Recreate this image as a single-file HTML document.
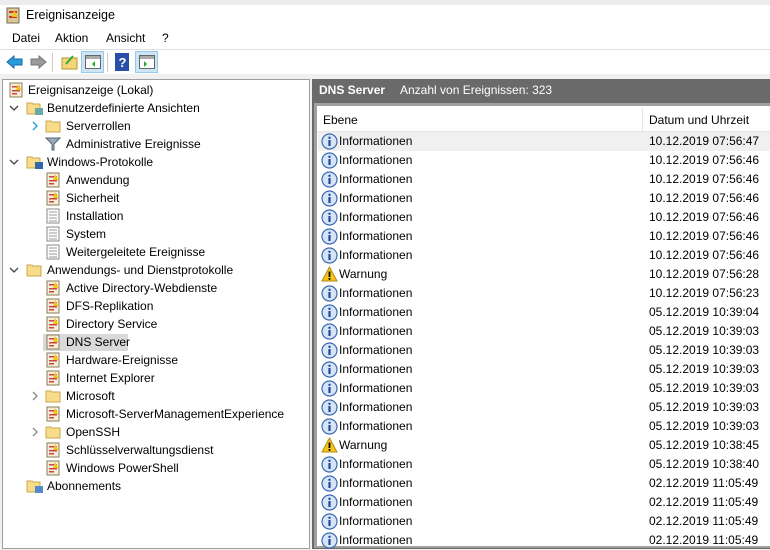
<!DOCTYPE html>
<html><head><meta charset="utf-8"><style>
*{margin:0;padding:0;box-sizing:border-box}
body{width:770px;height:543px;overflow:hidden;background:#f0f0f0;font-family:"Liberation Sans",sans-serif;font-size:12px;color:#000;position:relative}
.abs{position:absolute}
.t{white-space:nowrap}
.ico{display:inline-block;vertical-align:middle}
.row{position:absolute;left:318px;width:452px;height:19px;line-height:19px;white-space:nowrap}
.row .d{position:absolute;left:331px}
.row .n{position:absolute;left:21px}
</style></head><body>
<div class="abs" style="left:0;top:0;width:770px;height:5px;background:#ececec"></div>
<div class="abs" style="left:0;top:5px;width:770px;height:44px;background:#fff"></div>
<svg class="abs" style="left:5px;top:7px" width="16" height="17"><rect x="2" y="1" width="12" height="15" fill="#d8c89a" stroke="#7a6a4a"/><rect x="4" y="4" width="8" height="2" fill="#c33"/><rect x="4" y="9" width="8" height="2" fill="#c33"/><path d="M9 3 L13 10 L7 10Z" fill="#f5c518"/></svg>
<div class="abs t" style="left:26px;top:8px;font-size:12.5px">Ereignisanzeige</div>
<div class="abs t" style="left:12px;top:31px">Datei</div>
<div class="abs t" style="left:55px;top:31px">Aktion</div>
<div class="abs t" style="left:106px;top:31px">Ansicht</div>
<div class="abs t" style="left:162px;top:31px">?</div>
<div class="abs" style="left:0;top:49px;width:770px;height:1px;background:#e0e0e0"></div>
<div class="abs" style="left:0;top:50px;width:770px;height:24px;background:#fff"></div>
<svg class="abs" style="left:6px;top:54px" width="18" height="16"><path d="M1 8 L8 2 V5 H16 V11 H8 V14Z" fill="#2a9ad8" stroke="#1a6aa8"/></svg>
<svg class="abs" style="left:29px;top:54px" width="18" height="16"><path d="M17 8 L10 2 V5 H2 V11 H10 V14Z" fill="#9a9a9a" stroke="#777"/></svg>
<div class="abs" style="left:52px;top:53px;width:1px;height:19px;background:#ccc"></div>
<svg class="abs" style="left:61px;top:54px" width="17" height="16"><rect x="1" y="4" width="15" height="11" fill="#f3d57a" stroke="#b8962e"/><path d="M5 10 L12 2" stroke="#3a3" stroke-width="2"/></svg>
<div class="abs" style="left:81px;top:51px;width:23px;height:22px;background:#cde6f7;border:1px solid #99c9ea"></div>
<svg class="abs" style="left:85px;top:55px" width="16" height="14"><rect x="0.5" y="0.5" width="15" height="13" fill="#fff" stroke="#666"/><rect x="1" y="1" width="14" height="3" fill="#aaa"/><path d="M10 6 L7 9 L10 12Z" fill="#2a2"/></svg>
<div class="abs" style="left:107px;top:53px;width:1px;height:19px;background:#ccc"></div>
<svg class="abs" style="left:115px;top:53px" width="14" height="18"><rect x="0" y="0" width="14" height="18" fill="#2a4fa8"/><text x="3.5" y="14" font-size="13" font-family="Liberation Sans" font-weight="bold" fill="#fff">?</text></svg>
<div class="abs" style="left:135px;top:51px;width:23px;height:22px;background:#cde6f7;border:1px solid #99c9ea"></div>
<svg class="abs" style="left:139px;top:55px" width="16" height="14"><rect x="0.5" y="0.5" width="15" height="13" fill="#fff" stroke="#666"/><rect x="1" y="1" width="14" height="3" fill="#aaa"/><path d="M5 6 L8 9 L5 12Z" fill="#2a2"/></svg>

<div class="abs" style="left:2px;top:79px;width:308px;height:470px;background:#fff;border:1px solid #a0a0a0"></div>
<div id="tree"></div>
<div class="abs" style="left:312px;top:79px;width:458px;height:470px;background:#6a6a6a"></div>
<div class="abs t" style="left:319px;top:83px;color:#fff;font-weight:bold">DNS Server</div>
<div class="abs t" style="left:400px;top:83px;color:#fff">Anzahl von Ereignissen: 323</div>
<div class="abs" style="left:314px;top:103px;width:456px;height:445px;background:#a0a0a0"></div>
<div class="abs" style="left:317px;top:106px;width:453px;height:440px;background:#fff"></div>
<div class="abs" style="left:317px;top:131px;width:453px;height:1px;background:#e5e5e5"></div>
<div class="abs" style="left:642px;top:108px;width:1px;height:23px;background:#e5e5e5"></div>
<div class="abs t" style="left:323px;top:113px">Ebene</div>
<div class="abs t" style="left:649px;top:113px">Datum und Uhrzeit</div>
<div id="rows"></div>
<script>
function doc(){return '<svg class="ico" width="16" height="16"><rect x="2" y="1" width="12" height="14" fill="#f5eed8" stroke="#8a7a5a"/><rect x="4" y="4" width="8" height="1.5" fill="#c44"/><rect x="4" y="8" width="8" height="1.5" fill="#c44"/><rect x="4" y="11" width="5" height="1.5" fill="#c44"/><path d="M10 2 L13.5 8 L8 8Z" fill="#f5c518"/></svg>'}
function fold(){return '<svg class="ico" width="16" height="16"><path d="M1 3 H6 L7 4 H15 V14 H1Z" fill="#f8dc8a" stroke="#c8a850"/></svg>'}
function log(){return '<svg class="ico" width="16" height="16"><rect x="2" y="1" width="12" height="14" fill="#fff" stroke="#8a8a8a"/><path d="M4 4H12M4 7H12M4 10H12M4 13H12" stroke="#999"/></svg>'}
function filt(){return '<svg class="ico" width="16" height="16"><path d="M1 2 H15 L9 8 V14 L7 14 V8Z" fill="#9ab" stroke="#567"/></svg>'}
function fspec(c){return '<svg class="ico" width="18" height="16"><path d="M1 3 H6 L7 4 H14 V14 H1Z" fill="#f8dc8a" stroke="#c8a850"/><rect x="9" y="8" width="8" height="7" fill="'+c+'"/></svg>'}
var items=[
[0,8,28,doc(),'Ereignisanzeige (Lokal)',''],
[1,26,47,fspec('#6aa'),'Benutzerdefinierte Ansichten','v'],
[2,45,66,fold(),'Serverrollen','>b'],
[2,45,66,filt(),'Administrative Ereignisse',''],
[1,26,47,fspec('#36a'),'Windows-Protokolle','v'],
[2,45,66,doc(),'Anwendung',''],
[2,45,66,doc(),'Sicherheit',''],
[2,45,66,log(),'Installation',''],
[2,45,66,log(),'System',''],
[2,45,66,log(),'Weitergeleitete Ereignisse',''],
[1,26,47,fold(),'Anwendungs- und Dienstprotokolle','v'],
[2,45,66,doc(),'Active Directory-Webdienste',''],
[2,45,66,doc(),'DFS-Replikation',''],
[2,45,66,doc(),'Directory Service',''],
[2,45,66,doc(),'DNS Server','sel'],
[2,45,66,doc(),'Hardware-Ereignisse',''],
[2,45,66,doc(),'Internet Explorer',''],
[2,45,66,fold(),'Microsoft','>'],
[2,45,66,doc(),'Microsoft-ServerManagementExperience',''],
[2,45,66,fold(),'OpenSSH','>'],
[2,45,66,doc(),'Schlüsselverwaltungsdienst',''],
[2,45,66,doc(),'Windows PowerShell',''],
[1,26,47,fspec('#58c'),'Abonnements','']];
var h='';items.forEach(function(it,i){var y=81+i*18;
if(it[5]=='sel')h+='<div class="abs" style="left:43px;top:'+(y+1)+'px;width:85px;height:17px;background:#d9d9d9"></div>';
var a=it[5];
if(a=='v')h+='<svg class="abs" style="left:'+(it[1]-17)+'px;top:'+(y+5)+'px" width="10" height="8"><path d="M1 2 L5 6 L9 2" stroke="#444" fill="none" stroke-width="1.3"/></svg>';
if(a=='>'||a=='>b')h+='<svg class="abs" style="left:'+(it[1]-14)+'px;top:'+(y+4)+'px" width="8" height="10"><path d="M2 1 L6 5 L2 9" stroke="'+(a=='>b'?'#1e9be0':'#888')+'" fill="none" stroke-width="1.3"/></svg>';
h+='<div class="abs" style="left:'+it[1]+'px;top:'+(y+1)+'px">'+it[3]+'</div>';
h+='<div class="abs t" style="left:'+it[2]+'px;top:'+(y+2)+'px">'+it[4]+'</div>';});
document.getElementById('tree').innerHTML=h;
var info='<svg class="ico" width="17" height="17" style="position:absolute;left:3px;top:1px"><circle cx="8.5" cy="8.5" r="7.5" fill="#d6e4f6" stroke="#3a6ab0" stroke-width="1.2"/><circle cx="8.5" cy="4.8" r="1.2" fill="#1a4a9a"/><rect x="7.4" y="7" width="2.2" height="6" fill="#1a4a9a"/></svg>';
var warn='<svg class="ico" width="17" height="17" style="position:absolute;left:3px;top:1px"><path d="M8.5 1 L16 15 H1Z" fill="#f5c518" stroke="#b08a10"/><rect x="7.6" y="5.5" width="1.8" height="5.5" fill="#000"/><rect x="7.6" y="12" width="1.8" height="1.8" fill="#000"/></svg>';
var rows=[['I','10.12.2019 07:56:47'],['I','10.12.2019 07:56:46'],['I','10.12.2019 07:56:46'],['I','10.12.2019 07:56:46'],['I','10.12.2019 07:56:46'],['I','10.12.2019 07:56:46'],['I','10.12.2019 07:56:46'],['W','10.12.2019 07:56:28'],['I','10.12.2019 07:56:23'],['I','05.12.2019 10:39:04'],['I','05.12.2019 10:39:03'],['I','05.12.2019 10:39:03'],['I','05.12.2019 10:39:03'],['I','05.12.2019 10:39:03'],['I','05.12.2019 10:39:03'],['I','05.12.2019 10:39:03'],['W','05.12.2019 10:38:45'],['I','05.12.2019 10:38:40'],['I','02.12.2019 11:05:49'],['I','02.12.2019 11:05:49'],['I','02.12.2019 11:05:49'],['I','02.12.2019 11:05:49']];
var r='';rows.forEach(function(x,i){var y=132+i*19;
r+='<div class="row" style="top:'+y+'px;'+(i==0?'background:#f0f0f0':'')+'">'+(x[0]=='I'?info:warn)+'<span class="n">'+(x[0]=='I'?'Informationen':'Warnung')+'</span><span class="d">'+x[1]+'</span></div>';});
document.getElementById('rows').innerHTML=r;
</script>
</body></html>
